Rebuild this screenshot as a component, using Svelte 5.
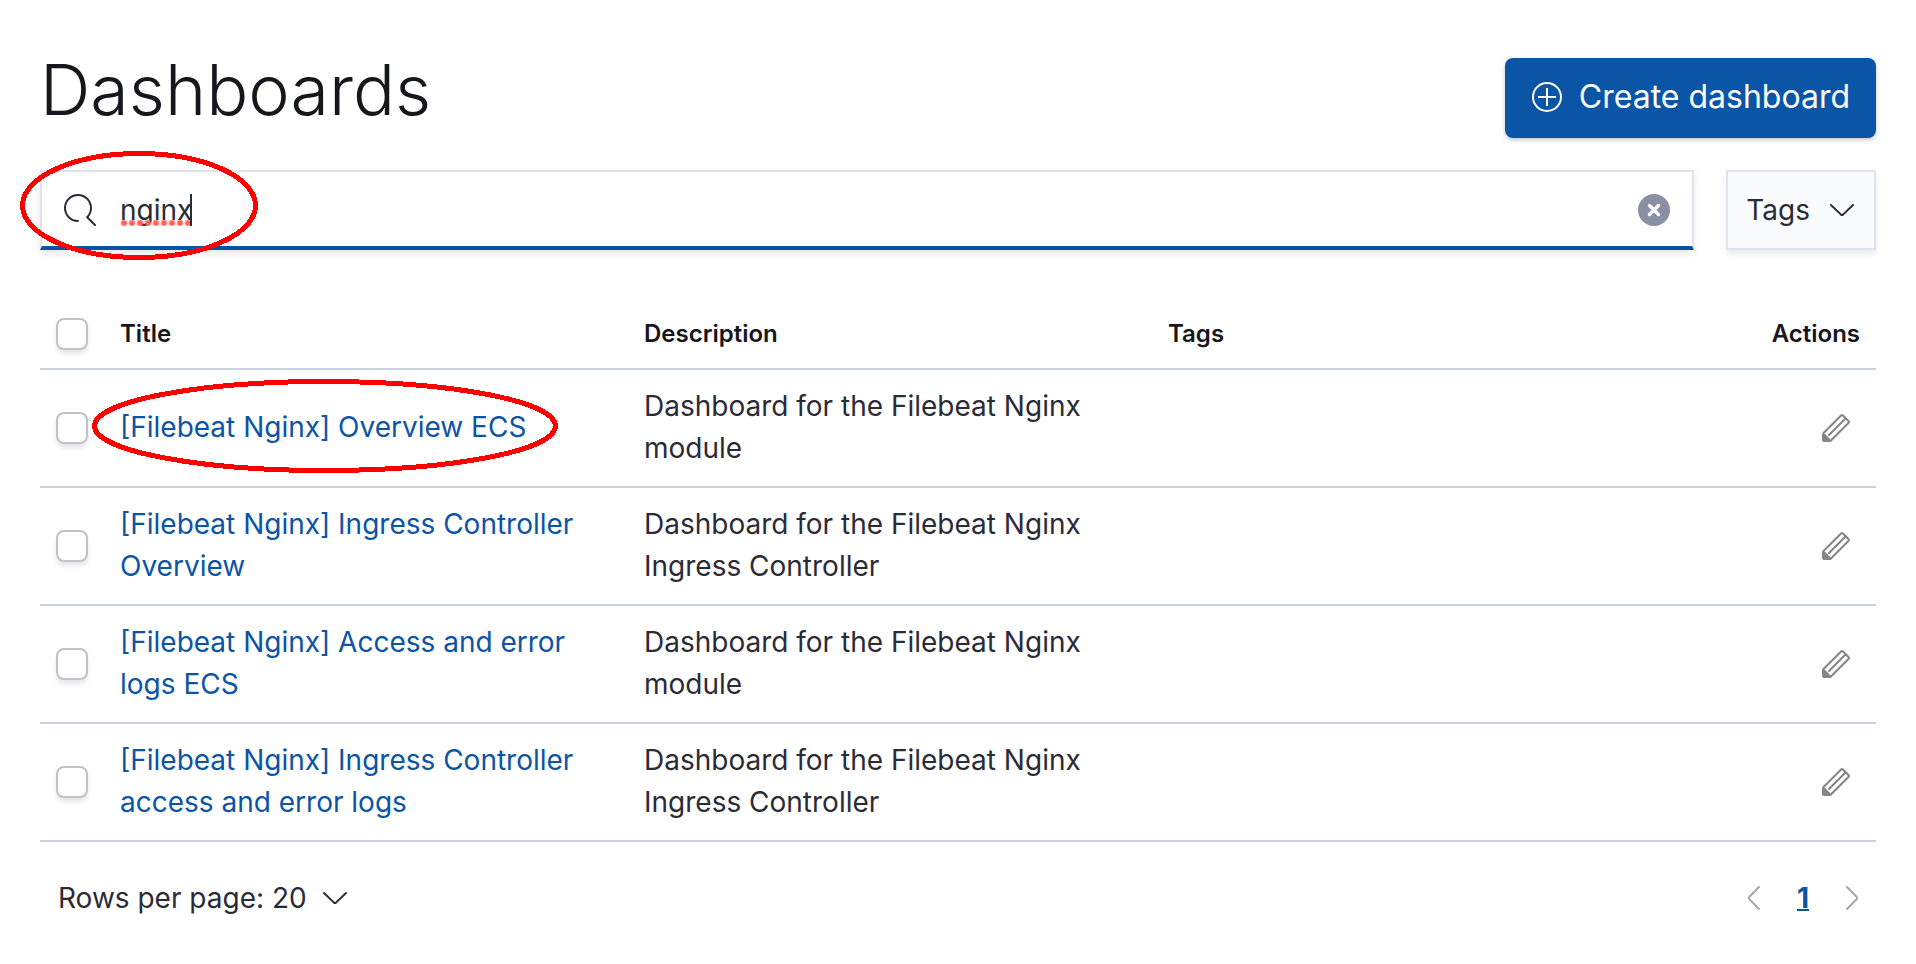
<script>
  let query = $state('nginx');

  let rows = $state([
    { title: '[Filebeat Nginx] Overview ECS', description: 'Dashboard for the Filebeat Nginx module', marked: true, selected: false },
    { title: '[Filebeat Nginx] Ingress Controller Overview', description: 'Dashboard for the Filebeat Nginx Ingress Controller', marked: false, selected: false },
    { title: '[Filebeat Nginx] Access and error logs ECS', description: 'Dashboard for the Filebeat Nginx module', marked: false, selected: false },
    { title: '[Filebeat Nginx] Ingress Controller access and error logs', description: 'Dashboard for the Filebeat Nginx Ingress Controller', marked: false, selected: false }
  ]);
</script>

{#snippet chevronDown()}
  <svg class="icon" viewBox="0 0 32 32" aria-hidden="true">
    <path d="M5 11 L15 20.6 Q16 21.4 17 20.6 L27 11" fill="none" stroke="currentColor" stroke-width="2" stroke-linecap="round" />
  </svg>
{/snippet}

<main>
  <header>
    <h1>Dashboards</h1>
    <button class="create" type="button">
      <svg class="icon" viewBox="0 0 32 32" aria-hidden="true">
        <circle cx="16" cy="16" r="14" fill="none" stroke="currentColor" stroke-width="2" />
        <path d="M16 7v18M7 16h18" stroke="currentColor" stroke-width="2" />
      </svg>
      <span>Create dashboard</span>
    </button>
  </header>

  <div class="filters">
    <div class="search">
      <svg class="icon" viewBox="0 0 16 16" aria-hidden="true">
        <path fill="currentColor" d="M11.271 11.978l3.872 3.873a.502.502 0 00.708 0 .502.502 0 000-.708l-3.565-3.564c2.38-2.747 2.267-6.923-.342-9.532-2.73-2.73-7.17-2.73-9.898 0-2.728 2.729-2.728 7.17 0 9.9a6.955 6.955 0 004.949 2.05.5.5 0 000-1 5.96 5.96 0 01-4.242-1.757 6.01 6.01 0 010-8.486 6.004 6.004 0 018.484 0 6.01 6.01 0 010 8.486.5.5 0 00.034.738z" />
      </svg>
      <input type="text" aria-label="Search dashboards" spellcheck="false" bind:value={query} />
      <span class="spelling" aria-hidden="true"></span>
      <button class="clear" type="button" aria-label="Clear search">
        <svg viewBox="0 0 32 32" aria-hidden="true">
          <path d="M11.5 11.5l9 9M20.5 11.5l-9 9" stroke="#fff" stroke-width="3.4" stroke-linecap="round" />
        </svg>
      </button>
      <svg class="mark mark-search" viewBox="0 0 238 109" aria-hidden="true">
        <ellipse cx="119" cy="54.5" rx="116.5" ry="52" />
      </svg>
    </div>
    <button class="tags" type="button">
      <span>Tags</span>
      {@render chevronDown()}
    </button>
  </div>

  <table>
    <thead>
      <tr>
        <th class="check"><input type="checkbox" aria-label="Select all rows" /></th>
        <th>Title</th>
        <th>Description</th>
        <th>Tags</th>
        <th class="actions">Actions</th>
      </tr>
    </thead>
    <tbody>
      {#each rows as row}
        <tr>
          <td class="check"><input type="checkbox" aria-label={row.title} bind:checked={row.selected} /></td>
          <td class="text title">
            <a href="#dashboard">{row.title}</a>
            {#if row.marked}
              <svg class="mark mark-row" viewBox="0 0 466 94" aria-hidden="true">
                <ellipse cx="233" cy="47" rx="230.5" ry="44.5" />
              </svg>
            {/if}
          </td>
          <td class="text">{row.description}</td>
          <td></td>
          <td class="actions">
            <button class="edit" type="button" aria-label="Edit">
              <svg class="icon" viewBox="0 0 16 16" aria-hidden="true">
                <path fill="currentColor" d="M12.148 3.148L11 2l-9 9v3h3l9-9-1.144-1.144-8.002 7.998a.502.502 0 01-.708 0 .502.502 0 010-.708l8.002-7.998zM11 1c.256 0 .512.098.707.293l3 3a.999.999 0 010 1.414l-9 9A.997.997 0 015 15H2a1 1 0 01-1-1v-3c0-.265.105-.52.293-.707l9-9A.997.997 0 0111 1z" />
                <path fill="currentColor" d="M1.500 11L2.300 10.700 5.300 13.700 5 14.500H2L1.500 14Z" />
              </svg>
            </button>
          </td>
        </tr>
      {/each}
    </tbody>
  </table>

  <footer>
    <button class="per-page" type="button">
      <span>Rows per page: 20</span>
      {@render chevronDown()}
    </button>
    <nav aria-label="Pagination">
      <button class="step" type="button" aria-label="Previous page">
        <svg class="icon" viewBox="0 0 32 32" aria-hidden="true">
          <path d="M21 5L11.200 15Q10.400 16 11.200 17L21 27" fill="none" stroke="currentColor" stroke-width="2" stroke-linecap="round" />
        </svg>
      </button>
      <a class="page" href="#page-1" aria-current="page">1</a>
      <button class="step" type="button" aria-label="Next page">
        <svg class="icon" viewBox="0 0 32 32" aria-hidden="true">
          <path d="M11 5L20.800 15Q21.600 16 20.800 17L11 27" fill="none" stroke="currentColor" stroke-width="2" stroke-linecap="round" />
        </svg>
      </button>
    </nav>
  </footer>
</main>

<style>
  :global(body) {
    background: #fff;
  }

  main {
    padding: 50px 40px 40px;
    font-family: Inter, "Liberation Sans", sans-serif;
    font-size: 28px;
    line-height: 42px;
    color: #2b2b38;
  }

  main * {
    box-sizing: border-box;
  }

  button {
    display: flex;
    align-items: center;
    justify-content: center;
    margin: 0;
    padding: 0;
    border: 0;
    background: none;
    color: inherit;
    font: inherit;
    cursor: pointer;
  }

  a {
    color: #0b54a6;
    text-decoration: none;
  }

  .icon {
    display: block;
    flex: none;
    width: 32px;
    height: 32px;
  }

  header {
    display: flex;
    align-items: flex-start;
    justify-content: space-between;
  }

  h1 {
    margin: 0;
    font-size: 70px;
    line-height: 80px;
    font-weight: 300;
    color: #16171c;
  }

  .create {
    gap: 16px;
    height: 80px;
    margin-top: 8px;
    padding: 0 26px 2px;
    border-radius: 8px;
    background: #0b55a6;
    box-shadow: 0 2px 4px rgba(40, 70, 110, 0.3);
    color: #fff;
    font-size: 32px;
  }

  .filters {
    display: flex;
    gap: 32px;
    margin-top: 32px;
  }

  .search {
    position: relative;
    display: flex;
    align-items: center;
    flex: 1;
    height: 80px;
    padding: 2px 22px 0;
    border: 2px solid #e0e2ee;
    border-bottom: 4px solid #0753a3;
    box-shadow: 0 4px 8px rgba(0, 0, 0, 0.09);
  }

  .search input {
    flex: 1;
    min-width: 0;
    height: 72px;
    padding: 0 24px;
    border: 0;
    outline: 0;
    background: transparent;
    color: inherit;
    font: inherit;
  }

  /* Dotted spelling underline closed by the text cursor */
  .spelling {
    position: absolute;
    left: 78px;
    top: 22px;
    width: 72px;
    height: 32px;
    border-right: 2px solid #2b2b38;
    background: radial-gradient(circle, #ff6058 0 2px, rgba(255, 96, 88, 0) 4px) 0 100% / 8px 6px repeat-x;
  }

  .clear {
    width: 32px;
    height: 32px;
    border-radius: 50%;
    background: #8990a4;
  }

  .tags {
    gap: 16px;
    height: 80px;
    padding: 0 16px 0 18px;
    border: 2px solid #e0e2ee;
    background: #fafbfd;
    box-shadow: 0 4px 6px rgba(0, 0, 0, 0.08);
  }

  .mark {
    position: absolute;
    overflow: visible;
    fill: none;
    stroke: #f00;
    stroke-width: 5;
    shape-rendering: crispEdges;
    pointer-events: none;
  }

  .mark-search {
    left: -22px;
    top: -21px;
    width: 238px;
    height: 109px;
  }

  .mark-row {
    left: -12px;
    top: 9px;
    width: 466px;
    height: 94px;
  }

  table {
    width: 100%;
    margin-top: 50px;
    border-collapse: separate;
    border-spacing: 0;
    table-layout: fixed;
  }

  th,
  td {
    padding: 16px;
    border-bottom: 2px solid #c9d1df;
    text-align: left;
    vertical-align: middle;
  }

  th {
    font-size: 24px;
    line-height: 36px;
    font-weight: 600;
    color: #16171c;
  }

  .text {
    padding: 15px 16px 17px;
  }

  .check {
    width: 64px;
  }

  .title {
    position: relative;
  }

  th.actions {
    width: 200px;
    text-align: right;
  }

  .check input {
    appearance: none;
    display: block;
    width: 32px;
    height: 32px;
    margin: 0;
    border: 2px solid #c0c2c6;
    border-radius: 8px;
    background: #fff;
    box-shadow: 0 4px 4px rgba(60, 60, 90, 0.12);
  }

  .edit {
    width: 48px;
    height: 48px;
    margin-left: auto;
    color: #858585;
  }

  footer {
    display: flex;
    align-items: center;
    justify-content: space-between;
    margin-top: 32px;
  }

  .per-page {
    gap: 12px;
    height: 48px;
    padding: 0 18px;
  }

  nav {
    display: flex;
    gap: 1px;
  }

  .step {
    width: 48px;
    height: 48px;
    color: #a5a7ab;
  }

  .page {
    width: 48px;
    line-height: 48px;
    font-weight: 700;
    text-align: center;
    text-decoration: underline;
    text-decoration-thickness: 2px;
  }
</style>
